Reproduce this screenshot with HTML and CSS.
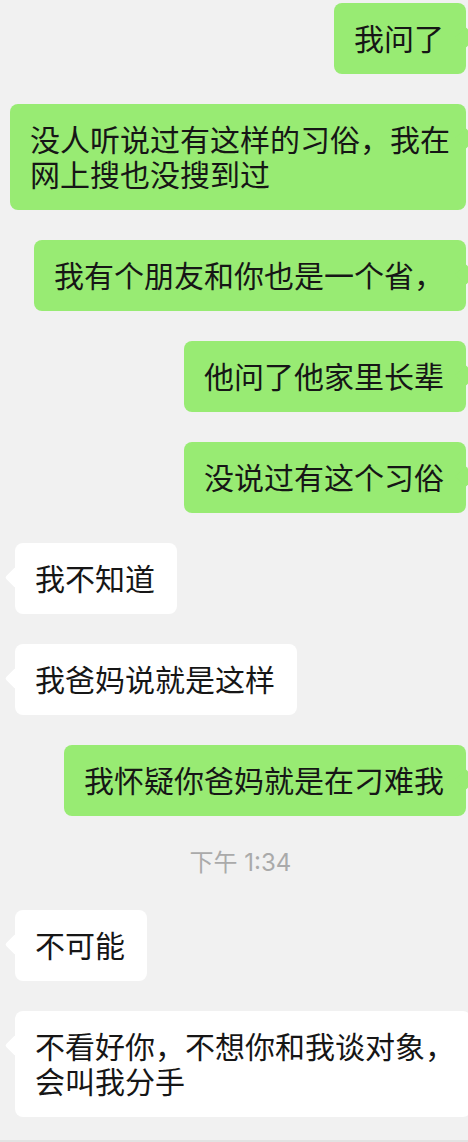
FILE: index.html
```
<!DOCTYPE html>
<html lang="zh-CN">
<head>
    <meta charset="UTF-8">
    <meta name="viewport" content="width=device-width, initial-scale=1.0">
    <title>聊天记录</title>
    <link rel="stylesheet" href="styles.css">
</head>
<body>

    <!-- 聊天内容 -->
    <main class="chat">
        <div class="message sent"><p class="bubble">我问了</p></div>
        <div class="message sent"><p class="bubble long">没人听说过有这样的习俗，我在网上搜也没搜到过</p></div>
        <div class="message sent"><p class="bubble">我有个朋友和你也是一个省，</p></div>
        <div class="message sent"><p class="bubble">他问了他家里长辈</p></div>
        <div class="message sent"><p class="bubble">没说过有这个习俗</p></div>
        <div class="message received"><p class="bubble">我不知道</p></div>
        <div class="message received"><p class="bubble">我爸妈说就是这样</p></div>
        <div class="message sent"><p class="bubble">我怀疑你爸妈就是在刁难我</p></div>

        <time class="time" datetime="13:34">下午 1:34</time>

        <div class="message received"><p class="bubble">不可能</p></div>
        <div class="message received"><p class="bubble long">不看好你，不想你和我谈对象，会叫我分手</p></div>
    </main>

</body>
</html>
```
FILE: styles.css
```
* {
    box-sizing: border-box;
}

body {
    margin: 0;
    background-color: #f1f1f1;
    color: #161616;
    font-family: "Inter", "Noto Sans CJK SC", sans-serif;
    overflow-x: hidden;
}

.chat {
    display: flex;
    flex-direction: column;
    gap: 30px;
    padding: 3px 2px 23px 15px;
    border-bottom: 2px solid #e2e2e2;
    overflow: hidden;
}

.message {
    display: flex;
}

.sent {
    justify-content: flex-end;
}

.bubble {
    position: relative;
    flex-shrink: 0;
    margin: 0;
    padding: 17px 22px 19px 20px;
    border-radius: 8px;
    font-family: "Noto Sans CJK SC", sans-serif;
    font-size: 30px;
    line-height: 35px;
}

/* 每行最多14个字 */
.bubble.long {
    width: 456px;
    padding-right: 16px;
}

.sent .bubble {
    background-color: #98eb73;
}

.received .bubble {
    background-color: #fff;
}

/* 气泡的小尖角 */
.bubble::before {
    content: "";
    position: absolute;
    top: 27px;
    width: 15px;
    height: 15px;
    border-radius: 2px;
    background-color: inherit;
    transform: rotate(45deg);
}

.sent .bubble::before {
    right: -7px;
}

.received .bubble::before {
    left: -7px;
}

.time {
    align-self: center;
    color: #aaa;
    font-size: 24px;
    line-height: 34px;
}
```
